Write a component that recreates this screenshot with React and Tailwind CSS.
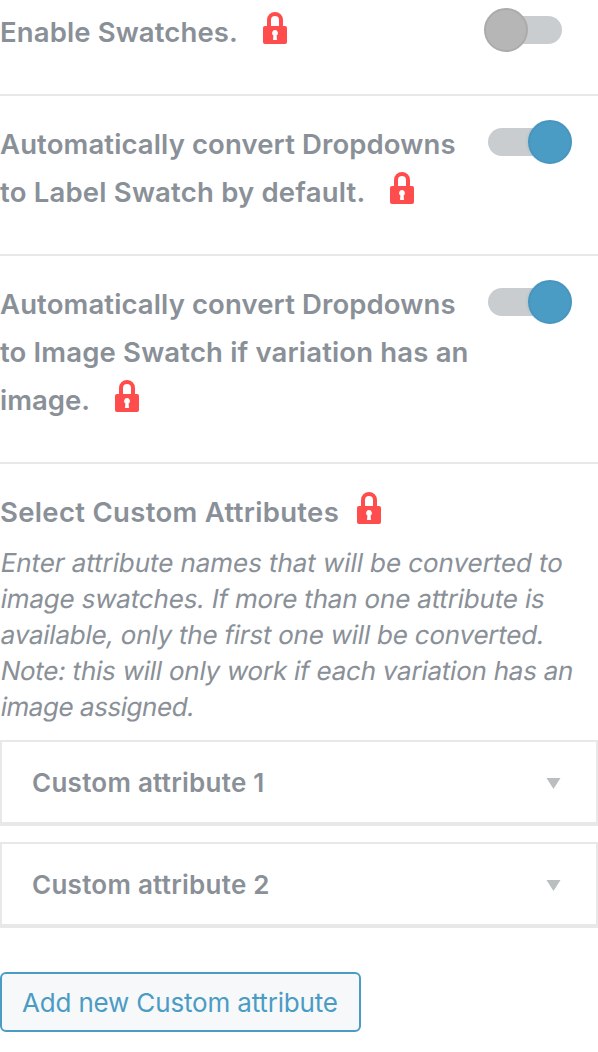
import React from "react";

function Lock() {
  return (
    <svg className="mt-1 h-8 w-6 shrink-0" viewBox="0 0 24 32" aria-hidden="true">
      <path d="M6 16V8a6 6 0 0 1 12 0v8" fill="none" stroke="#ff4c4c" strokeWidth="4" />
      <rect x="0" y="14" width="24" height="18" rx="2" fill="#ff4c4c" />
      <path d="M12 18a3 3 0 0 1 1.6 5.5L14 28h-4l.4-4.5A3 3 0 0 1 12 18Z" fill="#fff" />
    </svg>
  );
}

function Line({ children, className = "", lock }) {
  return (
    <span className="flex h-12 items-start whitespace-nowrap">
      <span className={"shrink-0 leading-[48px] " + className}>{children}</span>
      {lock && <Lock />}
    </span>
  );
}

function Toggle({ on }) {
  return (
    <button
      type="button"
      role="switch"
      aria-checked={!!on}
      className={
        "mt-2 flex h-7 w-[74px] shrink-0 items-center rounded-full bg-[#c9cdd0] " + (on ? "justify-end" : "justify-start")
      }
    >
      <span
        className={
          "size-11 shrink-0 rounded-full border-2 " +
          (on
            ? "-mr-2.5 border-[#4796bf] bg-[#4b9cc4] shadow-[-3px_0_1px_-1px_rgba(75,156,196,0.1)]"
            : "-ml-1 border-[#ababab] bg-[#b6b6b6]")
        }
      />
    </button>
  );
}

function Row({ children, on, className = "pt-6" }) {
  return (
    <div className={"flex border-b-2 border-[#e8e8e8] pb-[38px] " + className}>
      <div className="w-[488px] shrink-0 text-[27.5px] font-semibold">{children}</div>
      <Toggle on={on} />
    </div>
  );
}

function Attribute({ children, className }) {
  return (
    <div className="flex h-[86px] items-center justify-between border-2 border-b-4 border-[#e8e8e8] pr-[35px] pl-[30px]">
      <span className={"pt-0.5 text-[26px] leading-9 font-semibold whitespace-nowrap " + className}>{children}</span>
      <svg className="mt-0.5 h-3 w-[15px]" viewBox="0 0 15 12" aria-hidden="true">
        <path d="M.5.9h14l-7 11Z" fill="#b9bec1" />
      </svg>
    </div>
  );
}

export default function App() {
  return (
    <main className="h-[1052px] w-[598px] overflow-hidden bg-white font-['Inter',sans-serif] text-[#8a9097]">
      <Row className="pt-2">
        <Line lock className="w-[263px] tracking-[0.12px]">Enable Swatches.</Line>
      </Row>
      <Row on>
        <Line className="tracking-[0.12px]">Automatically convert Dropdowns</Line>
        <Line lock className="w-[390px] tracking-[0.2px]">to Label Swatch by default.</Line>
      </Row>
      <Row on>
        <Line className="tracking-[0.12px]">Automatically convert Dropdowns</Line>
        <Line className="tracking-[0.16px]">to Image Swatch if variation has an</Line>
        <Line lock className="w-[115px] tracking-[0.02px]">image.</Line>
      </Row>
      <section className="pt-6">
        <h3 className="text-[27.5px] font-semibold">
          <Line lock className="w-[357px] tracking-[0.32px]">Select Custom Attributes</Line>
        </h3>
        <p className="mt-[9px] ml-px flex flex-col items-start text-[26px] leading-9 whitespace-nowrap">
          <span className="-skew-x-[10deg] tracking-[-0.07px]">Enter attribute names that will be converted to</span>
          <span className="-skew-x-[10deg] tracking-[-0.18px]">image swatches. If more than one attribute is</span>
          <span className="-skew-x-[10deg] tracking-[-0.23px]">available, only the first one will be converted.</span>
          <span className="-skew-x-[10deg] tracking-[-0.24px]">Note: this will only work if each variation has an</span>
          <span className="-skew-x-[10deg] tracking-[-0.45px]">image assigned.</span>
        </p>
        <div className="mt-[15px] flex flex-col gap-4">
          <Attribute className="tracking-[0.26px]">Custom attribute 1</Attribute>
          <Attribute className="tracking-[0.26px]">Custom attribute 2</Attribute>
        </div>
        <button
          type="button"
          className="mt-11 flex h-[60px] w-[361px] items-center rounded-md border-2 border-[#4b9cc4] bg-[#f6f8fa] pt-px pl-5 text-[26px] tracking-[-0.17px] whitespace-nowrap text-[#4b9cc4]"
        >
          Add new Custom attribute
        </button>
      </section>
    </main>
  );
}
